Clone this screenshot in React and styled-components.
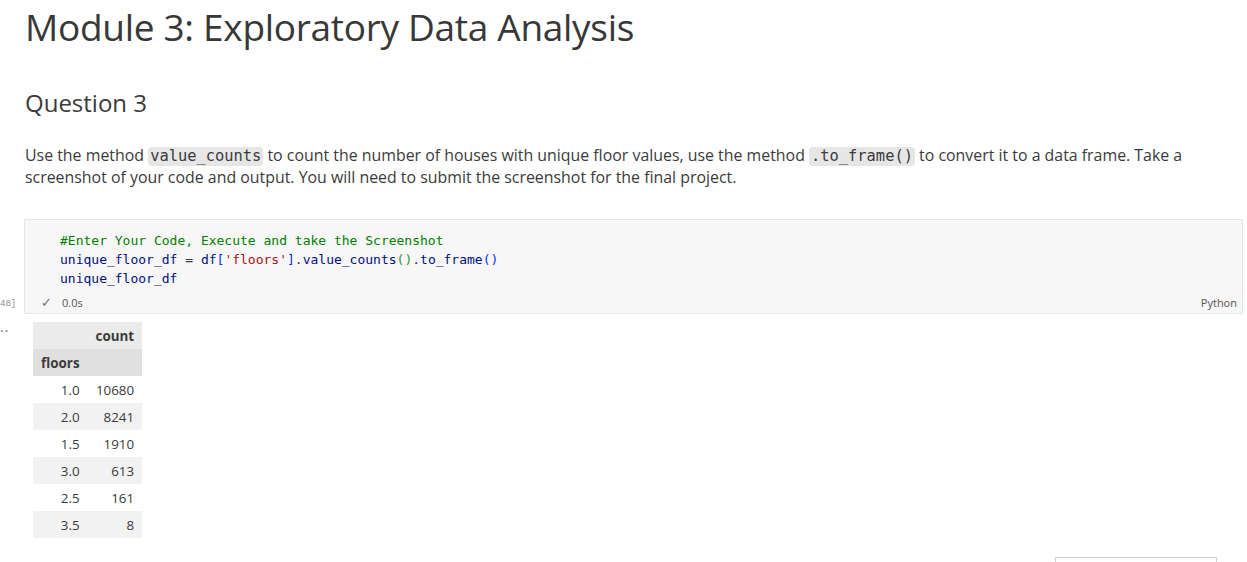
import React from "react";
import styled, { createGlobalStyle } from "styled-components";

const GlobalStyle = createGlobalStyle`
  html, body {
    margin: 0;
    padding: 0;
    background: #ffffff;
  }
  body {
    font-family: "Open Sans", "Noto Sans", sans-serif;
    color: #3b3b3b;
    overflow: hidden;
  }
`;

const Page = styled.div`
  width: 1247px;
  height: 562px;
  overflow: hidden;
`;

const Markdown = styled.div`
  padding-left: 25px;
  padding-right: 20px;
`;

const Title = styled.h1`
  margin: 0;
  padding-top: 4px;
  font-size: 37px;
  font-weight: 400;
  line-height: 46px;
  letter-spacing: -0.3px;
  color: #383838;
`;

const Subtitle = styled.h2`
  margin: 38px 0 0;
  font-size: 24px;
  font-weight: 400;
  line-height: 30px;
  color: #3b3b3b;
`;

const Paragraph = styled.p`
  margin: 26px 0 0;
  font-size: 15.9px;
  line-height: 22px;
  color: #3b3b3b;
  width: 1195px;
`;

const InlineCode = styled.code`
  display: inline-block;
  font-family: "DejaVu Sans Mono", "Liberation Mono", monospace;
  font-size: 15.4px;
  line-height: 19px;
  background: #e6e6e6;
  border-radius: 4px;
  padding: 0 2px;
  color: #3b3b3b;
`;

const CellRow = styled.div`
  display: flex;
  margin-top: 31px;
`;

const Gutter = styled.div`
  width: 24px;
  flex: none;
  display: flex;
  align-items: flex-end;
  padding-bottom: 5px;
  font-family: "Liberation Mono", monospace;
  font-size: 9px;
  color: #8a8a8a;
`;

const Cell = styled.div`
  width: 1219px;
  background: #f7f7f7;
  border: 1px solid #e5e5e5;
  box-sizing: border-box;
`;

const Code = styled.pre`
  margin: 0;
  padding: 11px 0 3px 35px;
  font-family: "DejaVu Sans Mono", "Liberation Mono", monospace;
  font-size: 13px;
  line-height: 19px;
  color: #001080;
`;

const Comment = styled.span`
  color: #008000;
`;

const Str = styled.span`
  color: #a31515;
`;

const Bracket = styled.span`
  color: ${(p) => p.$c};
`;

const Plain = styled.span`
  color: #3b3b3b;
`;

const Status = styled.div`
  display: flex;
  align-items: center;
  height: 22px;
  padding: 0 5px 0 16px;
  font-size: 11px;
  color: #555555;
`;

const Check = styled.span`
  color: #6f6f6f;
  font-size: 13px;
  margin-right: 10px;
`;

const Lang = styled.span`
  margin-left: auto;
  color: #555555;
`;

const OutputRow = styled.div`
  display: flex;
  margin-top: 8px;
`;

const OutGutter = styled.div`
  width: 33px;
  flex: none;
  font-size: 14px;
  color: #777777;
  letter-spacing: 1px;
  padding-top: 3px;
  line-height: 12px;
`;

const Table = styled.table`
  border-collapse: collapse;
  font-size: 13.4px;
  color: #3b3b3b;
`;

const Th = styled.th`
  height: 27px;
  padding: 0 8px;
  text-align: ${(p) => p.$align || "right"};
  font-weight: 700;
  background: ${(p) => p.$bg};
`;

const Td = styled.td`
  height: 27px;
  padding: 0 8px;
  text-align: right;
  background: ${(p) => (p.$odd ? "#f2f2f2" : "#ffffff")};
`;

const Footer = styled.div`
  display: flex;
  justify-content: flex-end;
  padding-right: 30px;
  margin-top: 19px;
`;

const Panel = styled.div`
  width: 160px;
  height: 30px;
  border: 1px solid #d0d0d0;
`;

const rows = [
  ["1.0", "10680"],
  ["2.0", "8241"],
  ["1.5", "1910"],
  ["3.0", "613"],
  ["2.5", "161"],
  ["3.5", "8"],
];

export default function App() {
  return (
    <Page>
      <GlobalStyle />
      <Markdown>
        <Title>Module 3: Exploratory Data Analysis</Title>
        <Subtitle>Question 3</Subtitle>
        <Paragraph>
          Use the method <InlineCode>value_counts</InlineCode> to count the number of houses with unique floor
          values, use the method <InlineCode>.to_frame()</InlineCode> to convert it to a data frame. Take a
          screenshot of your code and output. You will need to submit the screenshot for the final project.
        </Paragraph>
      </Markdown>
      <CellRow>
        <Gutter>48]</Gutter>
        <Cell>
          <Code>
            <Comment>#Enter Your Code, Execute and take the Screenshot</Comment>
            {"\n"}unique_floor_df <Plain>=</Plain> df<Bracket $c="#0431fa">[</Bracket>
            <Str>'floors'</Str>
            <Bracket $c="#0431fa">]</Bracket>
            <Plain>.</Plain>value_counts<Bracket $c="#319331">()</Bracket>
            <Plain>.</Plain>to_frame<Bracket $c="#0431fa">()</Bracket>
            {"\n"}unique_floor_df
          </Code>
          <Status>
            <Check>✓</Check>
            0.0s
            <Lang>Python</Lang>
          </Status>
        </Cell>
      </CellRow>
      <OutputRow>
        <OutGutter>··</OutGutter>
        <Table>
          <thead>
            <tr>
              <Th $bg="#ebebeb"></Th>
              <Th $bg="#ebebeb">count</Th>
            </tr>
            <tr>
              <Th $bg="#e0e0e0" $align="left">floors</Th>
              <Th $bg="#e0e0e0"></Th>
            </tr>
          </thead>
          <tbody>
            {rows.map(([f, c], i) => (
              <tr key={f}>
                <Td $odd={i % 2 === 1}>{f}</Td>
                <Td $odd={i % 2 === 1}>{c}</Td>
              </tr>
            ))}
          </tbody>
        </Table>
      </OutputRow>
      <Footer>
        <Panel />
      </Footer>
    </Page>
  );
}
